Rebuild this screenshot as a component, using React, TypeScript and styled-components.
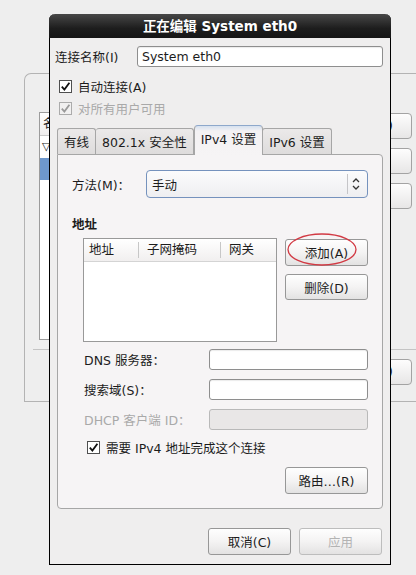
import styled, { createGlobalStyle, css } from "styled-components";

const GlobalStyle = createGlobalStyle`
  html, body {
    margin: 0;
    padding: 0;
    background: #eeeeee;
  }
  body {
    font-family: "DejaVu Sans", "Noto Sans CJK SC", sans-serif;
    font-size: 12.5px;
    color: #1c1c1c;
  }
`

const Screen = styled.div`
  position: relative;
  width: 416px;
  height: 575px;
  overflow: hidden;
  background: #eeeeee;
  padding: 73px 0 0 24px;
  box-sizing: border-box;
`

// parent window (connection list) behind the dialog
const ParentFrame = styled.div`
  width: 420px;
  height: 329px;
  box-sizing: border-box;
  border: 1px solid #b3b3b3;
  border-right: none;
  border-top-left-radius: 7px;
  padding-top: 38px;
`

const ParentTop = styled.div`
  display: flex;
  gap: 10px;
  margin-left: 14px;
`

const ParentList = styled.div`
  width: 251px;
  height: 228px;
  box-sizing: border-box;
  border: 1px solid #9c9c9c;
  background: #ffffff;
  display: flex;
  flex-direction: column;
`

const ParentListHead = styled.div`
  height: 22px;
  padding-left: 3px;
  line-height: 22px;
  border-bottom: 1px solid #c9c9c9;
  background: linear-gradient(#ffffff, #efeded);
`

const ParentListRow = styled.div<{ $selected?: boolean }>`
  height: 22px;
  line-height: 22px;
  padding-left: 2px;
  font-size: 11px;
  ${p => p.$selected && css`
    background: #6e98cd;
    color: #ffffff;
  `}
`

const ParentButtons = styled.div`
  display: flex;
  flex-direction: column;
  gap: 9px;
  padding-top: 1px;
`

const ParentButton = styled.div`
  width: 112px;
  height: 26px;
  box-sizing: border-box;
  border: 1px solid #a3a3a3;
  border-radius: 4px;
  background: linear-gradient(#fdfdfd, #e7e6e6);
  text-align: right;
  padding-right: 18px;
  line-height: 24px;
`

const ParentSeparator = styled.div`
  margin: 9px 0 0 8px;
  height: 1px;
  background: #c4c4c4;
`

const ParentBottom = styled.div`
  display: flex;
  justify-content: flex-end;
  margin: 9px 0 0 0;
  padding-right: 32px;
`

// the edit dialog, a window over the parent one
const Dialog = styled.div`
  position: absolute;
  left: 49px;
  top: 14px;
  width: 342px;
  height: 551px;
  box-sizing: border-box;
  border: 1px solid #000000;
  border-top: none;
  border-radius: 6px 6px 0 0;
  background: #efeeee;
  display: flex;
  flex-direction: column;
`

const TitleBar = styled.div`
  height: 24px;
  margin: 0 -1px;
  border-radius: 6px 6px 0 0;
  background: linear-gradient(#474747, #1d1d1d 60%, #151515);
  color: #ffffff;
  font-weight: bold;
  font-size: 13.5px;
  line-height: 25px;
  text-align: center;
`

const DialogBody = styled.div`
  padding: 8px 7px 0 5px;
  display: flex;
  flex-direction: column;
`

const NameRow = styled.div`
  display: flex;
  align-items: center;
  height: 21px;
`

const FieldLabel = styled.div<{ $width?: number; $disabled?: boolean }>`
  width: ${p => p.$width ?? 82}px;
  flex: none;
  white-space: nowrap;
  color: ${p => (p.$disabled ? "#a9a9a9" : "#1c1c1c")};
`

const Entry = styled.div<{ $disabled?: boolean }>`
  flex: 1;
  height: 21px;
  box-sizing: border-box;
  border: 1px solid ${p => (p.$disabled ? "#b9b9b9" : "#8e8e8e")};
  border-radius: 3px;
  background: ${p => (p.$disabled ? "#e9e7e7" : "#ffffff")};
  box-shadow: ${p => (p.$disabled ? "none" : "inset 0 1px 1px rgba(0,0,0,0.08)")};
  padding-left: 4px;
  line-height: 19px;
  white-space: nowrap;
`

const CheckRow = styled.div<{ $disabled?: boolean; $indent: number; $top: number; $height?: number }>`
  display: flex;
  align-items: center;
  gap: 6px;
  height: ${p => p.$height ?? 22}px;
  margin-top: ${p => p.$top}px;
  padding-left: ${p => p.$indent}px;
  color: ${p => (p.$disabled ? "#a9a9a9" : "#1c1c1c")};
  white-space: nowrap;
`

const Box = styled.span<{ $disabled?: boolean }>`
  width: 13px;
  height: 13px;
  box-sizing: border-box;
  border: 1px solid ${p => (p.$disabled ? "#ababab" : "#4f4f4f")};
  background: ${p => (p.$disabled ? "#f1f0f0" : "#ffffff")};
  display: flex;
  align-items: center;
  justify-content: center;
  flex: none;
`

const TabStrip = styled.div`
  display: flex;
  align-items: flex-end;
  height: 29px;
  margin: 6px 0 0 2px;
  position: relative;
  z-index: 1;
`

const Tab = styled.div<{ $active?: boolean }>`
  box-sizing: border-box;
  padding: 0 6px;
  white-space: nowrap;
  border: 1px solid #a6a6a6;
  border-bottom: none;
  border-left-width: ${p => (p.$active ? 1 : 0)}px;
  &:first-child {
    border-left-width: 1px;
  }
  ${p => p.$active
    ? css`
      height: 30px;
      margin-bottom: -1px;
      line-height: 27px;
      border-color: #8ea8cb #a6a6a6 #a6a6a6 #a6a6a6;
      border-radius: 4px 4px 0 0;
      background: linear-gradient(#d6e1ef 0, #f3f1f3 5px, #f6f4f5);
      margin-right: -1px;
      & + div { border-left-width: 1px; }
    `
    : css`
      height: 26px;
      line-height: 27px;
      border-radius: 3px 3px 0 0;
      background: linear-gradient(#ebe9e9, #dedcdc);
    `}
`

const Notebook = styled.div`
  margin-left: 2px;
  height: 355px;
  box-sizing: border-box;
  border: 1px solid #a6a6a6;
  border-radius: 0 4px 4px 4px;
  background: #f6f4f5;
  padding: 15px 14px 0 14px;
  display: flex;
  flex-direction: column;
`

const MethodRow = styled.div`
  display: flex;
  align-items: center;
  height: 28px;
`

const Combo = styled.div`
  flex: 1;
  height: 28px;
  box-sizing: border-box;
  border: 1px solid #7592bd;
  border-radius: 4px;
  background: linear-gradient(#fbfbfc, #eeeef1);
  display: flex;
  align-items: center;
  padding-left: 5px;
`

const ComboText = styled.span`
  flex: 1;
`

const ComboSep = styled.span`
  width: 1px;
  height: 20px;
  background: #c5c5c8;
  margin-right: 4px;
`

const ComboArrows = styled.span`
  width: 8px;
  margin-right: 7px;
  display: flex;
`

const SectionTitle = styled.div`
  margin-top: 19px;
  height: 16px;
  line-height: 16px;
  font-weight: bold;
`

const AddressArea = styled.div`
  display: flex;
  gap: 8px;
  margin-top: 5px;
  padding-left: 11px;
`

const AddrTable = styled.div`
  width: 194px;
  height: 104px;
  box-sizing: border-box;
  border: 1px solid #999999;
  background: #ffffff;
`

const TableHead = styled.div`
  display: flex;
  height: 22px;
  border-bottom: 1px solid #d4d4d4;
  background: linear-gradient(#ffffff, #f1efef);
`

const HeadCell = styled.div<{ $width: number }>`
  width: ${p => p.$width}px;
  box-sizing: border-box;
  padding-left: 5px;
  line-height: 22px;
  & + & {
    border-left: 1px solid #c7c7c7;
    margin: 3px 0;
    line-height: 16px;
    padding-left: 8px;
  }
`

const SideButtons = styled.div`
  display: flex;
  flex-direction: column;
  gap: 8px;
  padding-top: 1px;
`

const Button = styled.div<{ $height?: number; $disabled?: boolean }>`
  position: relative;
  width: 83px;
  height: ${p => p.$height ?? 27}px;
  box-sizing: border-box;
  border: 1px solid ${p => (p.$disabled ? "#bdbdbd" : "#979797")};
  border-radius: 3px;
  background: linear-gradient(#fefefe, #f4f3f3 50%, #e3e2e2);
  display: flex;
  align-items: center;
  justify-content: center;
  white-space: nowrap;
  color: ${p => (p.$disabled ? "#b3b3b3" : "#1c1c1c")};
`

const Annotation = styled.svg`
  position: absolute;
  left: 1px;
  top: -7px;
  overflow: visible;
`

const FormGrid = styled.div`
  display: grid;
  grid-template-columns: 125px 1fr;
  grid-auto-rows: 21px;
  row-gap: 9px;
  align-items: center;
  margin-top: 7px;
  padding-left: 12px;
`

const RouteRow = styled.div`
  display: flex;
  justify-content: flex-end;
  margin-top: 11px;
`

const ActionRow = styled.div`
  display: flex;
  justify-content: flex-end;
  gap: 8px;
  margin-top: 19px;
  padding-right: 1px;
`

const Check = ({ disabled }: { disabled?: boolean }) => (
  <Box $disabled={disabled}>
    <svg width="11" height="11" viewBox="0 0 11 11">
      <path d="M1.8 5.6 L4.4 8.6 L9.4 1.8" fill="none" stroke={disabled ? "#9a9a9a" : "#111"} strokeWidth="1.8" />
    </svg>
  </Box>
)

export default function App() {
  return (
    <>
      <GlobalStyle />
      <Screen>
        <ParentFrame>
          <ParentTop>
            <ParentList>
              <ParentListHead>名</ParentListHead>
              <ParentListRow>▽</ParentListRow>
              <ParentListRow $selected />
            </ParentList>
            <ParentButtons>
              <ParentButton>)</ParentButton>
              <ParentButton />
              <ParentButton />
            </ParentButtons>
          </ParentTop>
          <ParentSeparator />
          <ParentBottom>
            <ParentButton>)</ParentButton>
          </ParentBottom>
        </ParentFrame>

        <Dialog>
          <TitleBar>正在编辑 System eth0</TitleBar>
          <DialogBody>
            <NameRow>
              <FieldLabel>连接名称(I)</FieldLabel>
              <Entry>System eth0</Entry>
            </NameRow>
            <CheckRow $indent={4} $top={8}>
              <Check />
              自动连接(A)
            </CheckRow>
            <CheckRow $indent={4} $top={0} $disabled>
              <Check disabled />
              对所有用户可用
            </CheckRow>

            <TabStrip>
              <Tab>有线</Tab>
              <Tab>802.1x 安全性</Tab>
              <Tab $active>IPv4 设置</Tab>
              <Tab>IPv6 设置</Tab>
            </TabStrip>
            <Notebook>
              <MethodRow>
                <FieldLabel $width={74}>方法(M)：</FieldLabel>
                <Combo>
                  <ComboText>手动</ComboText>
                  <ComboSep />
                  <ComboArrows>
                    <svg width="8" height="14" viewBox="0 0 8 14">
                      <path d="M1 5 L4 2 L7 5 M1 9 L4 12 L7 9" fill="none" stroke="#333" strokeWidth="1.3" />
                    </svg>
                  </ComboArrows>
                </Combo>
              </MethodRow>

              <SectionTitle>地址</SectionTitle>
              <AddressArea>
                <AddrTable>
                  <TableHead>
                    <HeadCell $width={54}>地址</HeadCell>
                    <HeadCell $width={82}>子网掩码</HeadCell>
                    <HeadCell $width={56}>网关</HeadCell>
                  </TableHead>
                </AddrTable>
                <SideButtons>
                  <Button>
                    添加(A)
                    <Annotation width="70" height="33" viewBox="0 0 70 33">
                      <ellipse cx="35" cy="16.5" rx="34" ry="15.5" fill="none" stroke="#d23a44" strokeWidth="1.3" />
                    </Annotation>
                  </Button>
                  <Button $height={26}>删除(D)</Button>
                </SideButtons>
              </AddressArea>

              <FormGrid>
                <FieldLabel $width={125}>DNS 服务器：</FieldLabel>
                <Entry />
                <FieldLabel $width={125}>搜索域(S)：</FieldLabel>
                <Entry />
                <FieldLabel $width={125} $disabled>DHCP 客户端 ID：</FieldLabel>
                <Entry $disabled />
              </FormGrid>

              <CheckRow $indent={15} $top={8} $height={18}>
                <Check />
                需要 IPv4 地址完成这个连接
              </CheckRow>

              <RouteRow>
                <Button>路由…(R)</Button>
              </RouteRow>
            </Notebook>

            <ActionRow>
              <Button>取消(C)</Button>
              <Button $disabled>应用</Button>
            </ActionRow>
          </DialogBody>
        </Dialog>
      </Screen>
    </>
  )
}
